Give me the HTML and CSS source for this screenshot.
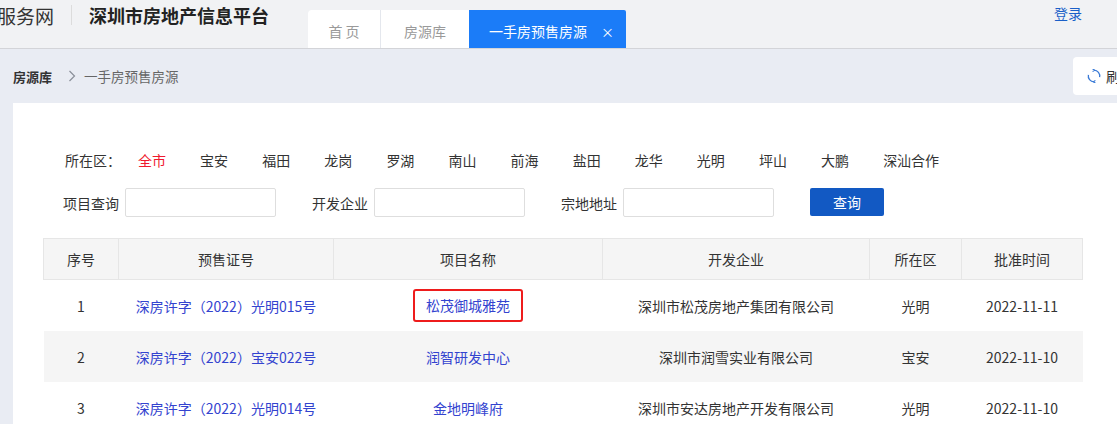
FILE: index.html
```html
<!DOCTYPE html>
<html lang="zh-CN">
<head>
<meta charset="utf-8">
<title>一手房预售房源</title>
<link rel="stylesheet" href="styles.css">
</head>
<body>
<div class="header">
  <div class="brand">
    <span class="brand-sub">服务网</span>
    <span class="brand-sep"></span>
    <span class="brand-title">深圳市房地产信息平台</span>
  </div>
  <div class="tabs">
    <div class="tab tab-first">首 页</div>
    <div class="tab tab-second">房源库</div>
    <div class="tab tab-active">一手房预售房源<span class="tab-close">×</span></div>
  </div>
  <a class="login">登录</a>
</div>

<div class="crumbs">
  <span class="crumb-root">房源库</span>
  <svg class="crumb-arrow" width="8" height="12" viewBox="0 0 8 12"><path d="M1.5 1 L6.5 6 L1.5 11" fill="none" stroke="#8a8f99" stroke-width="1.2"/></svg>
  <span class="crumb-cur">一手房预售房源</span>
  <div class="refresh">
    <svg class="refresh-icon" width="14" height="14" viewBox="0 0 14 14">
      <path d="M7 1.2 A5.8 5.8 0 0 1 12.6 8.2" fill="none" stroke="#3a7ad6" stroke-width="1.3"/>
      <path d="M7 12.8 A5.8 5.8 0 0 1 1.4 5.8" fill="none" stroke="#3a7ad6" stroke-width="1.3"/>
      <path d="M5.6 0 L7.6 1.2 L5.6 2.6" fill="none" stroke="#3a7ad6" stroke-width="1.1"/>
      <path d="M8.4 14 L6.4 12.8 L8.4 11.4" fill="none" stroke="#3a7ad6" stroke-width="1.1"/>
    </svg>
    <span class="refresh-text">刷新</span>
  </div>
</div>

<div class="panel">
  <div class="districts">
    <span class="d-label">所在区：</span>
    <span class="d-item d-on">全市</span>
    <span class="d-item">宝安</span>
    <span class="d-item">福田</span>
    <span class="d-item">龙岗</span>
    <span class="d-item">罗湖</span>
    <span class="d-item">南山</span>
    <span class="d-item">前海</span>
    <span class="d-item">盐田</span>
    <span class="d-item">龙华</span>
    <span class="d-item">光明</span>
    <span class="d-item">坪山</span>
    <span class="d-item">大鹏</span>
    <span class="d-item">深汕合作</span>
  </div>
  <div class="search">
    <label class="s-label">项目查询</label><input class="s-input" type="text">
    <label class="s-label s-gap">开发企业</label><input class="s-input" type="text">
    <label class="s-label s-gap">宗地地址</label><input class="s-input" type="text">
    <button class="s-btn">查询</button>
  </div>
  <table class="grid">
    <colgroup>
      <col class="c1"><col class="c2"><col class="c3"><col class="c4"><col class="c5"><col class="c6">
    </colgroup>
    <thead>
      <tr><th>序号</th><th>预售证号</th><th>项目名称</th><th>开发企业</th><th>所在区</th><th>批准时间</th></tr>
    </thead>
    <tbody>
      <tr>
        <td>1</td>
        <td><a class="link">深房许字（2022）光明015号</a></td>
        <td><a class="link mark">松茂御城雅苑</a></td>
        <td>深圳市松茂房地产集团有限公司</td>
        <td>光明</td>
        <td>2022-11-11</td>
      </tr>
      <tr class="alt">
        <td>2</td>
        <td><a class="link">深房许字（2022）宝安022号</a></td>
        <td><a class="link">润智研发中心</a></td>
        <td>深圳市润雪实业有限公司</td>
        <td>宝安</td>
        <td>2022-11-10</td>
      </tr>
      <tr>
        <td>3</td>
        <td><a class="link">深房许字（2022）光明014号</a></td>
        <td><a class="link">金地明峰府</a></td>
        <td>深圳市安达房地产开发有限公司</td>
        <td>光明</td>
        <td>2022-11-10</td>
      </tr>
    </tbody>
  </table>
</div>
</body>
</html>
```

FILE: styles.css
```css
html, body {
  margin: 0;
  padding: 0;
  overflow: hidden;
  height: 100%;
}
body {
  background: #e9ecf3;
  font-family: "Noto Sans CJK SC", "Noto Sans", sans-serif;
  font-size: 14px;
  color: #333;
}

/* header */
.header {
  display: flex;
  height: 48px;
  background: #f1f2f4;
  border-bottom: 1px solid #d3d4d8;
}
.brand {
  display: flex;
  align-items: center;
  height: 30px;
}
.brand-sub {
  margin-left: -3px;
  font-size: 19px;
  color: #333;
  white-space: nowrap;
}
.brand-sep {
  width: 1px;
  height: 20px;
  background: #dcdcdc;
  margin-left: 17px;
}
.brand-title {
  margin-left: 17px;
  font-size: 18px;
  font-weight: bold;
  color: #222;
  white-space: nowrap;
}
.tabs {
  display: flex;
  align-self: flex-end;
  margin-left: 39px;
  height: 38px;
}
.tab {
  box-sizing: border-box;
  height: 38px;
  padding-top: 4px;
  line-height: 34px;
  background: #fff;
  color: #9a9a9a;
  text-align: center;
  white-space: nowrap;
}
.tab-first {
  width: 72px;
  border-top-left-radius: 4px;
}
.tab-second {
  width: 89px;
  border-left: 1px solid #e4e7ed;
}
.tab-active {
  width: 157px;
  background: #1b7cf8;
  color: #fff;
  text-align: left;
  padding-left: 20px;
  border-top-right-radius: 2px;
}
.tab-close {
  margin-left: 14px;
  font-size: 13px;
}
.login {
  margin-left: auto;
  margin-right: 35px;
  line-height: 27px;
  color: #1a5fc8;
  white-space: nowrap;
}

/* breadcrumbs */
.crumbs {
  display: flex;
  align-items: center;
  height: 54px;
  padding-left: 13px;
}
.crumb-root {
  font-size: 13px;
  font-weight: bold;
  color: #333;
}
.crumb-arrow {
  margin-left: 16px;
}
.crumb-cur {
  margin-left: 8px;
  font-size: 13.5px;
  color: #666;
}
.refresh {
  display: flex;
  align-items: center;
  margin-left: auto;
  margin-right: -31px;
  height: 38px;
  padding: 0 14px;
  background: #fff;
  border-radius: 4px;
  white-space: nowrap;
}
.refresh-icon {
  display: block;
}
.refresh-text {
  margin-left: 5px;
  color: #333;
}

/* panel */
.panel {
  background: #fff;
  margin-left: 13px;
  height: 320px;
  padding: 45px 0 0 30px;
}
.districts {
  display: flex;
  height: 24px;
  line-height: 24px;
  padding-left: 22px;
  white-space: nowrap;
}
.d-label {
  width: 73px;
  color: #333;
}
.d-item {
  width: 62.1px;
  color: #333;
}
.d-on {
  color: #ef1a2f;
}
.search {
  display: flex;
  align-items: center;
  margin-top: 16px;
  padding-left: 20px;
  height: 29px;
}
.s-label {
  color: #333;
  white-space: nowrap;
}
.s-gap {
  margin-left: 36px;
}
.s-input {
  box-sizing: border-box;
  width: 151px;
  height: 29px;
  margin: 0 0 0 6px;
  border: 1px solid #dedede;
  border-radius: 2px;
  padding: 0 6px;
  font-family: inherit;
}
.s-btn {
  box-sizing: border-box;
  width: 74px;
  height: 28px;
  margin-left: 36px;
  margin-top: -1px;
  border: 0;
  border-radius: 2px;
  background: #1259c3;
  color: #fff;
  font-family: inherit;
  font-size: 14px;
  padding: 0;
}

/* table */
.grid {
  margin-top: 21px;
  width: 1039px;
  table-layout: fixed;
  border-collapse: collapse;
}
.c1 { width: 75px; }
.c2 { width: 215px; }
.c3 { width: 269px; }
.c4 { width: 267px; }
.c5 { width: 92px; }
.c6 { width: 121px; }
.grid th {
  height: 40px;
  padding: 0;
  background: #f5f5f5;
  border: 1px solid #e6e6e6;
  font-weight: normal;
  color: #333;
  text-align: center;
}
.grid td {
  height: 51px;
  padding: 0;
  text-align: center;
  color: #333;
  white-space: nowrap;
}
.grid tr.alt td {
  background: #f5f5f5;
}
.link {
  color: #3343cf;
}
.mark {
  display: inline-block;
  padding: 5px 11px;
  line-height: 19px;
  border: 2px solid #ee1c1c;
  border-radius: 3px;
}
```
